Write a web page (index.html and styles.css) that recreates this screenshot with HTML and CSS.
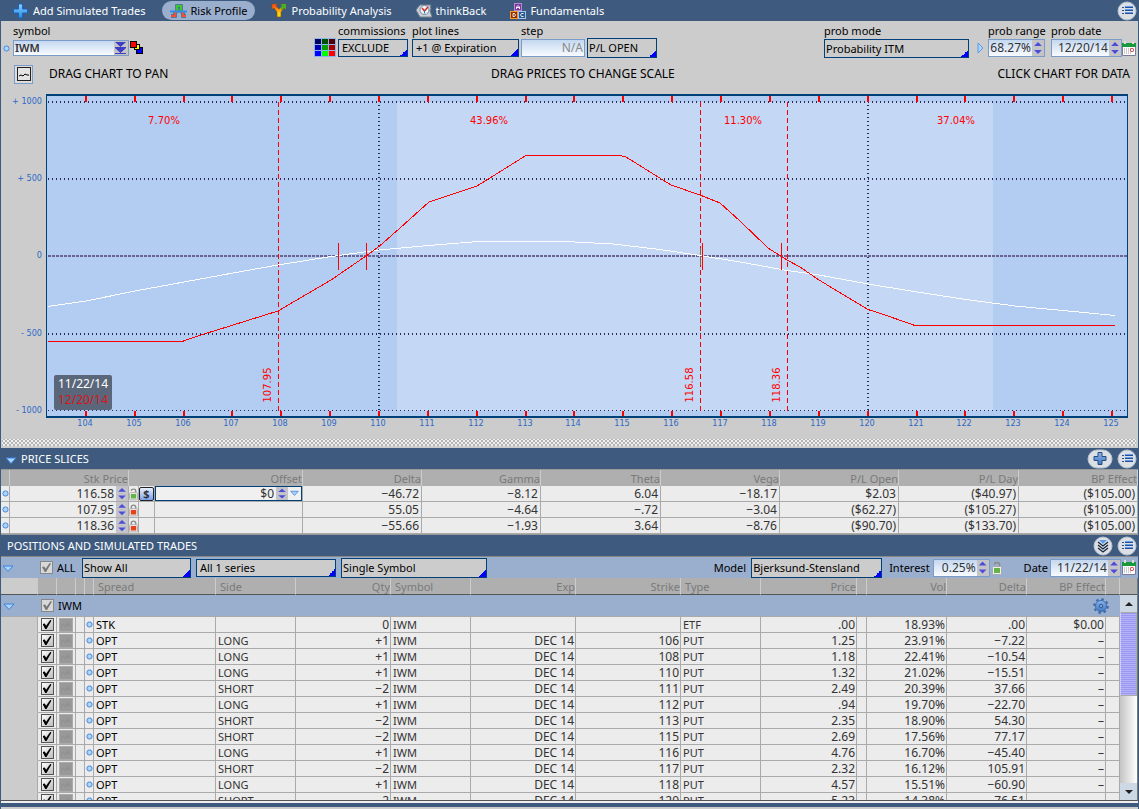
FILE: index.html
```html
<!DOCTYPE html>
<html lang="en">
<head>
<meta charset="utf-8">
<title>Risk Profile</title>
<link rel="stylesheet" href="styles.css">
</head>
<body>
<svg class="defs" width="0" height="0" aria-hidden="true">
  <defs>
    <linearGradient id="gPlus" x1="0" y1="0" x2="0" y2="1"><stop offset="0" stop-color="#8fd0ff"/><stop offset="1" stop-color="#1f8ae6"/></linearGradient>
    <linearGradient id="gY" x1="0" y1="0" x2="0" y2="1"><stop offset="0.2" stop-color="#ff5a14"/><stop offset="0.7" stop-color="#ffd800"/></linearGradient>
    <linearGradient id="gBell" x1="0" y1="0" x2="0" y2="1"><stop offset="0.4" stop-color="#38c832"/><stop offset="0.6" stop-color="#f0503c"/></linearGradient>
    <linearGradient id="gSteel" x1="0" y1="0" x2="0" y2="1"><stop offset="0" stop-color="#8db4ea"/><stop offset="1" stop-color="#4478c0"/></linearGradient>
    <symbol id="list" viewBox="0 0 20 20"><circle cx="10" cy="10" r="9" fill="#dcdfe3" stroke="#b4c2d2"/><path d="M5 6.500h2M5 9.500h2M5 12.500h2" stroke="#2b4f90"/><path d="M8 6.500h8M8 9.500h8M8 12.500h8" stroke="#2b4f90"/><path d="M8 5.500h8M8 8.500h8M8 11.500h8" stroke="#5c9cf0"/></symbol>
    <symbol id="dot" viewBox="0 0 7 7"><circle cx="3.5" cy="3.5" r="2.6" fill="#a8d4ff" stroke="#4a86d8"/></symbol>
    <symbol id="tri" viewBox="0 0 12 8"><path d="M1 1h10L6 6.500z" fill="#a8d4ff" stroke="#3c82dc"/></symbol>
    <symbol id="cal" viewBox="0 0 14 15"><path d="M.5 2.500h13v12h-13z" fill="#fff" stroke="#7a7a9a"/><path d="M0 2h14v4H0z" fill="#189a3c"/><path d="M3 0v3M11 0v3" stroke="#ddd" stroke-width="2"/><path d="M2 8h7M2 10h7M2 12h8" stroke="#999" stroke-dasharray="1 1"/><rect x="8.500" y="7.500" width="3" height="3" rx="1" fill="#fff" stroke="#e02020"/></symbol>
    <symbol id="lockR" viewBox="0 0 10 14"><path d="M2.500 6V4a2.500 2.500 0 0 1 5 0v2" fill="none" stroke="#8a8a8a" stroke-width="1.500"/><rect x=".5" y="5.500" width="9" height="8" rx="1" fill="#eee" stroke="#aaa"/><rect x="2" y="7" width="6" height="5" fill="#e8401c"/></symbol>
    <symbol id="lockG" viewBox="0 0 10 14"><path d="M2.500 3.500a2.500 2 0 0 1 5 0v2.500" fill="none" stroke="#8a8a8a" stroke-width="1.500"/><rect x=".5" y="5.500" width="9" height="8" rx="1" fill="#eee" stroke="#aaa"/><rect x="2" y="7" width="6" height="5" fill="#62b44a"/></symbol>
  </defs>
</svg>

<main class="app">
  <nav class="tabs">
    <button class="tab"><svg width="17" height="16" viewBox="0 0 17 16"><path d="M6.500 1h4v5h5v4h-5v5h-4v-5h-5V6h5z" fill="url(#gPlus)" stroke="#1d62b4"/></svg>Add Simulated Trades</button>
    <button class="tab tab-on"><svg width="17" height="14" viewBox="0 0 17 14"><path d="M1 12h4V9l2-2V2h4v5l2 2v3h3" fill="none" stroke="#3c6a80" stroke-width="3.500"/><path d="M1 12h4V9l2-2V2h4v5l2 2v3h3" fill="none" stroke="url(#gBell)" stroke-width="2.200"/><path d="M0 7.500h17" stroke="#2c90e8" stroke-width="2"/></svg>Risk Profile</button>
    <button class="tab"><svg width="16" height="15" viewBox="0 0 16 15"><path d="M1 1h5L5 3l3 3 3-3-1-2h5v5l-2-1-3 4v5H6V9L3 5 1 6z" fill="url(#gY)" stroke="#8a4a10" stroke-width=".6"/><path d="M15 1v5l-2-1-2 2-1.500-1.500L11 3l-1-2z" fill="#3fb428"/></svg>Probability Analysis</button>
    <button class="tab"><svg width="16" height="15" viewBox="0 0 16 15"><path d="M0 7l4-5h11l-1 2 1 1-1 3 2 6H4z" fill="#c9d0d8" stroke="#78828f"/><circle cx="8.500" cy="7" r="4.500" fill="#eef6fb" stroke="#70889c"/><path d="M6 5l2.500 3L12 4" fill="none" stroke="#d83020" stroke-width="1.500"/><path d="M8.500 7.500v3" stroke="#2c74b0"/></svg>thinkBack</button>
    <button class="tab"><svg width="16" height="16" viewBox="0 0 16 16"><rect x="4.500" y=".5" width="7" height="7" fill="#7a3a9a" stroke="#b888d8"/><rect x=".5" y="8.500" width="7" height="7" fill="#8a3008" stroke="#ff9a20"/><rect x="8.500" y="8.500" width="7" height="7" fill="#2a5a90" stroke="#9cc4ee"/><path d="M6.500 6V4L8 2.500 9.500 4v2M6.500 4.500h3M3 10.500v3h1.500L5.500 12l-1-1.500zM13.500 10.500h-2L10.500 12l1 1.500h2" fill="none" stroke="#fff" stroke-width=".9"/></svg>Fundamentals</button>
    <button class="icon-btn tabs-menu" aria-label="Menu"><svg width="20" height="20"><use href="#list"/></svg></button>
  </nav>

  <section class="controls">
    <div class="group group-left">
      <svg class="lead" width="7" height="7"><use href="#dot"/></svg>
      <div class="field"><label for="symbol">symbol</label>
        <div class="box symbol-box"><input id="symbol" value="IWM"><button class="drop" aria-label="Open"><svg width="13" height="12" viewBox="0 0 13 12"><path d="M1 0h11L6.500 5zM1 6h11l-5.500 5z" fill="#3c3cc8"/><path d="M1 5.500h11M1 11.500h11" stroke="#3c3cc8"/></svg></button></div>
      </div>
      <svg class="swatches" width="14" height="14" viewBox="0 0 14 14"><g stroke="#000"><rect x="6.500" y="6.500" width="6" height="6" fill="#00f"/><rect x="4.500" y="3.500" width="5" height="5" fill="#ff0"/><rect x=".5" y=".5" width="6" height="6" fill="#f00"/></g></svg>
    </div>
    <div class="group">
      <svg class="palette" width="22" height="19" viewBox="0 0 22 19"><path fill="#8cb4e8" d="M0 0h22v19H0z"/><path fill="#000060" d="M1 1h6v5H1z"/><path fill="#005000" d="M8 1h6v5H8z"/><path fill="#500000" d="M15 1h6v5h-6z"/><path fill="#0000b0" d="M1 7h6v5H1z"/><path fill="#00a000" d="M8 7h6v5H8z"/><path fill="#a80000" d="M15 7h6v5h-6z"/><path fill="#00f" d="M1 13h6v5H1z"/><path fill="#0f0" d="M8 13h6v5H8z"/><path fill="#f00" d="M15 13h6v5h-6z"/></svg>
      <div class="field"><label for="comm">commissions</label><select id="comm" class="pick w70"><option>EXCLUDE</option></select></div>
      <div class="field gap4"><label for="lines">plot lines</label><select id="lines" class="pick w107"><option>+1 @ Expiration</option></select></div>
      <div class="field gap2"><label for="step">step</label><div class="box step-box"><input id="step" value="N/A"></div></div>
      <div class="field gap2"><select aria-label="Plot value" class="pick pick-tall w70"><option>P/L OPEN</option></select></div>
    </div>
    <div class="group">
      <div class="field"><label for="mode">prob mode</label><select id="mode" class="pick pick-tall w145"><option>Probability ITM</option></select></div>
      <svg class="play" width="7" height="12" viewBox="0 0 7 12"><path d="M1 1l5 5-5 5z" fill="#a8d4ff" stroke="#5c9ae8"/></svg>
      <div class="field range"><label for="range">prob range</label><div class="box w57"><input id="range" value="68.27%"><span class="spin"><button aria-label="Up"></button><button aria-label="Down"></button></span></div></div>
      <div class="field"><label for="pdate">prob date</label><div class="box w71"><input id="pdate" value="12/20/14"><span class="spin"><button aria-label="Up"></button><button aria-label="Down"></button></span></div></div>
      <svg class="calendar" width="14" height="15"><use href="#cal"/></svg>
    </div>
  </section>

  <div class="hints">
    <button class="chart-btn" aria-label="Chart"><svg width="14" height="14" viewBox="0 0 14 14"><rect x=".5" y=".5" width="13" height="13" fill="#e4e4e4" stroke="#222"/><path d="M2 9l2-1 2 1 2-2 2 1h2" fill="none" stroke="#000"/></svg></button>
    <span class="hint-l">DRAG CHART TO PAN</span><span>DRAG PRICES TO CHANGE SCALE</span><span class="hint-r">CLICK CHART FOR DATA</span>
  </div>

  <svg class="chart" viewBox="1 90 1137 349" role="img" aria-label="Risk profile">
    <rect x="46" y="94" width="1082" height="324" fill="#004078"/>
    <rect x="47" y="96" width="1080" height="320" fill="#b2ccf2"/>
    <rect x="397" y="102" width="596" height="309" fill="#c4d7f5"/>
    <g stroke="#2c2858" stroke-width="2" stroke-dasharray="1 3">
      <path d="M48 102H1127M48 179H1127M48 334H1127"/><path d="M48 410.500H1127" stroke-width="1"/>
      <path d="M379 101V411M868 101V411"/>
    </g>
    <path d="M48 256H1127" stroke="#6a6492" stroke-width="2" stroke-dasharray="3 1"/>
    <path d="M278.500 102V411M700.500 102V411M787.500 102V411" stroke="#f00" stroke-dasharray="5 3"/>
    <path d="M700.500 248V265" stroke="#8a6a30"/>
    <g fill="none" shape-rendering="crispEdges">
      <path stroke="#fff" d="M48 306.500L86 301 135 291 184 282 233 273 278 265 331 256.500 379 250 429 245.500 478 241.500 565 241.500 613 244 660 249.500 700 255.500 740 262 787 270.500 819 275 868 284 917 292 966 299.500 1015 306 1063 310.500 1115 315.500"/>
      <path stroke="#f00" d="M48 341.500H182L204 334 230 326 278 311 295 301 331 280 366 256 379 246.500 400 228 429 202 450 195 477 186 526 155.500H620L626 157 671 185 700 195 720 203 740 221 768 248 787 260 800 267 819 280 868 309.500 885 315 915 325.500H1115"/>
      <path stroke="#f00" d="M338.500 243V270M366.500 243V270M702.500 243V270M781.500 243V270"/>
    </g>
    <g id="ticks" class="axis"></g>
    <g class="axis axis-y"><text x="42" y="104">+ 1000</text><text x="42" y="181">+ 500</text><text x="42" y="258">0</text><text x="42" y="336">- 500</text><text x="42" y="413">- 1000</text></g>
    <g class="pct"><text x="164" y="124">7.70%</text><text x="489" y="124">43.96%</text><text x="743" y="124">11.30%</text><text x="956" y="124">37.04%</text></g>
    <g class="pct"><text transform="translate(271 385) rotate(-90)">107.95</text><text transform="translate(693 385) rotate(-90)">116.58</text><text transform="translate(780 385) rotate(-90)">118.36</text></g>
    <rect x="54" y="375" width="58" height="35" rx="2" fill="#5a677a"/>
    <g class="legend"><text x="83" y="388" fill="#fff">11/22/14</text><text x="83" y="404" fill="#d8141c">12/20/14</text></g>
  </svg>
  <div class="grip"></div>

  <header class="bar"><svg class="bar-tri" width="12" height="8"><use href="#tri"/></svg><h2>PRICE SLICES</h2>
    <button class="icon-btn" aria-label="Add slice"><svg width="26" height="20" viewBox="0 0 26 20"><rect x="1" y="1" width="24" height="18" rx="9" fill="#dcdfe3" stroke="#b4c2d2"/><path d="M11 3.500h4v4h4v4h-4v4h-4v-4H7v-4h4z" fill="url(#gSteel)" stroke="#274c80"/></svg></button>
    <button class="icon-btn" aria-label="Menu"><svg width="20" height="20"><use href="#list"/></svg></button>
  </header>
  <table class="grid slices">
    <colgroup id="sliceCols"></colgroup>
    <thead><tr><th></th><th>Stk Price</th><th class="join"></th><th class="join"></th><th>Offset</th><th>Delta</th><th>Gamma</th><th>Theta</th><th>Vega</th><th>P/L Open</th><th>P/L Day</th><th>BP Effect</th></tr></thead>
    <tbody id="sliceRows"></tbody>
  </table>

  <header class="bar bar-second"><h2>POSITIONS AND SIMULATED TRADES</h2>
    <button class="icon-btn" aria-label="Expand"><svg width="20" height="20" viewBox="0 0 20 20"><circle cx="10" cy="10" r="9" fill="#dcdfe3" stroke="#b4c2d2"/><path d="M6 4h8l-4 4z" fill="#5c9cf0"/><path d="M5 6l5 4 5-4M5 9l5 4 5-4M5 12l5 4 5-4" fill="none" stroke="#152540" stroke-width="1.300"/></svg></button>
    <button class="icon-btn" aria-label="Menu"><svg width="20" height="20"><use href="#list"/></svg></button>
  </header>
  <div class="filter">
    <svg class="fold" width="12" height="8"><use href="#tri"/></svg>
    <input type="checkbox" class="tick dim" id="all" checked><label for="all" class="all">ALL</label>
    <select aria-label="Show" class="pick pick-tall w109"><option>Show All</option></select>
    <select aria-label="Series" class="pick w140"><option>All 1 series</option></select>
    <select aria-label="Grouping" class="pick pick-tall w146"><option>Single Symbol</option></select>
    <span class="push"></span>
    <label for="model">Model</label><select id="model" class="pick pick-tall w131"><option>Bjerksund-Stensland</option></select>
    <label for="interest" class="lab">Interest</label><div class="box w57"><input id="interest" value="0.25%"><span class="spin"><button aria-label="Up"></button><button aria-label="Down"></button></span></div>
    <svg class="f-lock" width="10" height="14"><use href="#lockG"/></svg>
    <label for="fdate">Date</label><div class="box w71"><input id="fdate" value="11/22/14"><span class="spin"><button aria-label="Up"></button><button aria-label="Down"></button></span></div>
    <svg width="14" height="15"><use href="#cal"/></svg>
  </div>
  <div class="positions">
    <div class="table-clip">
      <table class="grid trades">
        <colgroup id="tradeCols"></colgroup>
        <thead><tr><th class="blank"></th><th></th><th></th><th></th><th></th><th class="l">Spread</th><th class="l">Side</th><th>Qty</th><th class="l">Symbol</th><th>Exp</th><th>Strike</th><th class="l">Type</th><th>Price</th><th></th><th>Vol</th><th>Delta</th><th>BP Effect</th><th></th></tr></thead>
        <tbody id="tradeRows"><tr class="head-row"><td colspan="18"><div class="head-in"><svg class="fold" width="12" height="8"><use href="#tri"/></svg><input type="checkbox" class="tick dim" id="iwm" checked><label for="iwm">IWM</label><span class="push"></span>
          <svg width="16" height="16" viewBox="0 0 16 16"><circle cx="8" cy="8" r="6.800" fill="none" stroke="#3a6cac" stroke-width="2" stroke-dasharray="2.600 2.740"/><circle cx="8" cy="8" r="5.500" fill="url(#gSteel)" stroke="#3a6cac"/><circle cx="8" cy="8" r="1.800" fill="#7aa4dc" stroke="#2c5c98"/></svg></div></td></tr></tbody>
      </table>
    </div>
    <div class="scroll"><div class="scroll-head"></div><button class="arrow up" aria-label="Scroll up"></button><div class="track"><div class="thumb"></div></div><button class="arrow down" aria-label="Scroll down"></button></div>
  </div>
  <div class="foot"></div>
</main>
<script src="app.js"></script>
</body>
</html>
```
FILE: styles.css
```css
* { box-sizing: border-box; }
html, body { height: 100%; }
body { margin: 0; background: #ccc; color: #000; font: 11px/16px "Noto Sans", "Open Sans", sans-serif; overflow: hidden; }
button, input, select { font: inherit; color: inherit; margin: 0; padding: 0; border: 0; border-radius: 0; background: none; }
svg { display: block; flex: none; }
.defs { position: absolute; }
.app { height: 100vh; display: flex; flex-direction: column; border: solid #3e5b7f; border-width: 0 1px; background: #ccc; }
.app > * { flex: none; }

.tabs { display: flex; align-items: center; gap: 8px; height: 21px; padding-left: 3px; background: #3e5b7f; color: #fff; }
.tab { display: flex; align-items: center; gap: 4px; height: 19px; padding: 0 8px; white-space: nowrap; }
.tab-on { background: #9aaecd; color: #000; border-radius: 10px; }
.icon-btn { flex: none; height: 20px; margin-right: 1px; }
.tabs-menu { margin-left: auto; }

.controls { display: flex; justify-content: space-between; padding: 2px 2px 0; height: 37px; }
.group { display: flex; align-items: flex-end; }
.group-left { padding-right: 3px; }
.field { display: flex; flex-direction: column; align-self: stretch; }
.field label { white-space: nowrap; line-height: 16px; width: 0; }
.field label + *, .field > select:only-child { margin-top: auto; }
.field .pick, .field .box { margin-bottom: 1px; }
.field .pick-tall { margin-bottom: 0; }
.lead { margin: 0 3px 6px 0; }
.box { display: flex; height: 18px; border: 1px solid #7c9cc8; background: linear-gradient(#c4d8f0, #f8fbff); color: #333; font-size: 12px; }
.box input { flex: 1; min-width: 0; width: 0; text-align: right; padding: 0 1px; }
.symbol-box { width: 116px; height: 16px; }
.field .symbol-box { margin-bottom: 2px; }
.symbol-box input { text-align: left; font-size: 11px; font-weight: 600; }
.drop { width: 14px; background: #c4c4c4; }
.swatches { margin: 0 0 3px 1px; }
.palette { margin: 0 2px 1px 0; }
.gap4 { margin-left: 4px; }
.gap2 { margin-left: 2px; }
.step-box { width: 64px; color: #888; }
.pick { appearance: none; height: 18px; padding: 0 3px; border: 1px solid #004078; background: linear-gradient(135deg, transparent 50%, #00f 50%) right bottom / 7px 7px no-repeat #ccc; line-height: 16px; }
.pick-tall { height: 20px; padding-left: 1px; }
.w70 { width: 70px; }
.w107 { width: 107px; }
.w145 { width: 145px; }
.w57 { width: 57px; }
.w71 { width: 71px; }
.w109 { width: 109px; }
.w140 { width: 140px; }
.w146 { width: 146px; }
.w131 { width: 131px; }
.play { margin: 0 4px 4px 8px; }
.range { margin-right: 6px; }
.calendar { margin-bottom: 2px; }
.spin { display: flex; flex-direction: column; width: 12px; flex: none; background: #c4c4c8; }
.spin button { flex: 1; background: #4b4bdc; clip-path: polygon(50% 25%, 82% 75%, 18% 75%); }
.spin button:last-child { clip-path: polygon(18% 25%, 82% 25%, 50% 75%); }

.hints { display: flex; align-items: center; justify-content: space-between; height: 32px; padding: 0 8px 0 13px; font-size: 12px; }
.chart-btn { width: 19px; height: 19px; display: grid; place-items: center; border: 1px solid #7c9cc8; background: #ddd; }
.hint-l { margin-left: 16px; margin-right: auto; }
.hint-r { margin-left: auto; }

.chart { width: 100%; height: auto; }
.axis text { font: 9px "DejaVu Sans Condensed", "DejaVu Sans", sans-serif; fill: #2c68c8; text-anchor: middle; }
.axis-y text { text-anchor: end; }
.pct text { font: 10px "DejaVu Sans", sans-serif; fill: #f00; text-anchor: middle; }
.legend text { font: 12px "Noto Sans", sans-serif; text-anchor: middle; }
.grip { height: 9px; margin: 0 2px 0 1px; background: radial-gradient(circle, rgba(255, 255, 255, .8) 1px, transparent 1px) 0 0 / 4px 4px, radial-gradient(circle, rgba(255, 255, 255, .8) 1px, transparent 1px) 2px 2px / 4px 4px, #b4b4b4; border-bottom: 2px solid #ccc; }

.bar { display: flex; align-items: center; height: 21px; background: #3e5b7f; color: #fff; padding-left: 4px; }
.bar h2 { margin: 0 auto 0 0; font: inherit; }
.bar-tri { margin: 5px 4px 0 0; }
.bar .icon-btn { margin-left: 3px; }
.bar-second { padding-left: 6px; }

.grid { width: 100%; table-layout: fixed; border-collapse: separate; border-spacing: 0; background: #ececec; }
.grid th, .grid td { padding: 0 1px; height: 16px; line-height: 15px; text-align: right; white-space: nowrap; overflow: hidden; border: solid #aaa; border-width: 0 1px 1px 0; font-weight: 400; color: #333; }
.grid td { font-size: 12px; }
.grid th { background: #afafaf; color: #7a7a7a; border-color: #ccc; border-bottom: 0; padding: 0; }
.grid td.l { text-align: left; padding-left: 2px; font-size: 11px; }
.grid td > svg { margin: 0 auto; }
.slices { border-bottom: 1px solid #999; border-top: 1px solid #999; }
.slices .join { border-right: 0; }
.slices td { padding-right: 2px; }
.slices td.ic { padding: 0; }
.cell { display: flex; justify-content: flex-end; align-items: center; height: 15px; gap: 2px; }
.cell .spin { height: 15px; width: 12px; }
.slices td.price { padding-right: 0; }
.dollar { width: 15px; height: 14px; display: block; line-height: 12px; border: 1px solid #222; border-radius: 2px; background: linear-gradient(#e8f0ff, #7ca0ec); text-align: center; font-size: 11px; font-weight: 700; }
.slices td.edit { padding: 0; }
.edit .cell { border: 1px solid #004078; background: #f0f0f0; }
.edit .spin { height: 13px; }
.edit input { flex: 1; width: 0; text-align: right; }
.edit .cell svg { margin: 0 2px 0 0; }

.filter { display: flex; align-items: center; height: 22px; padding: 0 2px 0 1px; background: #9aaecd; border-top: 1px solid #888; }
.fold { margin: 3px 26px 0 0; }
.tick { appearance: none; flex: none; width: 13px; height: 13px; border: 1px solid #555; background: linear-gradient(135deg, #fff, #bbb); display: grid; place-items: center; }
.tick:checked::before { content: ""; width: 9px; height: 9px; background: #000; clip-path: polygon(0 45%, 25% 40%, 40% 65%, 85% 0, 100% 5%, 45% 100%, 30% 100%); }
.dim { border-color: #888; background: #d8d8d8; }
.dim:checked::before { background: #777; }
.all { margin: 0 4px; width: 21px; }
.filter .w140 { margin: 0 5px; }
.push { flex: 1; }
.filter #model { margin: 0 7px 0 5px; }
.lab { margin-right: 3px; }
.f-lock { margin: 0 22px 0 2px; }
.filter label { white-space: nowrap; }
.filter .w71 { margin-left: 2px; margin-right: 1px; }

.app > .positions { flex: 1 1 0; min-height: 0; display: flex; border-bottom: 1px solid #555; border-right: 1px solid #777; }
.table-clip { flex: 1; min-width: 0; overflow: hidden; background: #ccc; }
.trades th { height: 17px; border-bottom: 1px solid #555; }
.trades th.blank, .trades td.blank { background: #ccc; }
.trades th.l { padding-left: 4px; text-align: left; }
.trades td.blank { border-bottom-color: #ccc; }
.trades td.name { color: #000; }
.trades .head-row td { height: 22px; background: #9aaecd; padding: 0; border-right-color: #9aaecd; }
.head-in { display: flex; align-items: center; height: 21px; padding: 0 10px 0 2px; color: #000; font-size: 11px; }
.head-in label { margin-left: 4px; }
.trades td > .tick { margin: 0 auto; }
.spark { display: block; width: 14px; height: 14px; background: #999; border: 1px solid #aaa; }

.scroll { width: 17px; flex: none; display: flex; flex-direction: column; }
.scroll-head { height: 17px; background: #afafaf; border-bottom: 1px solid #555; }
.arrow { height: 17px; background: #ccd8e4; display: grid; place-items: center; }
.arrow::before { content: ""; border: 4px solid transparent; border-top-width: 0; border-bottom-color: #222; }
.down::before { border-top: 4px solid #222; border-bottom: 0; }
.track { flex: 1; background: linear-gradient(90deg, #c4c4c4, #fff); }
.thumb { height: 49%; border: 1px solid #aaa; border-left-color: #ccccff; background: repeating-linear-gradient(#9a98ee 0 1px, #b4b2f8 1px 2px); }
.foot { height: 8px; border-top: 2px solid #eee; border-bottom: 2px solid #ccc; background: #3e5b7f; }
```
FILE: app.js
```js
const spin = '<span class="spin"><button aria-label="Up"></button><button aria-label="Down"></button></span>';
const icon = (id, w, h) => `<svg width="${w}" height="${h}"><use href="#${id}"/></svg>`;

function columns(id, widths) {
  document.getElementById(id).innerHTML = widths.map(w => `<col style="width:${w}px">`).join("");
}
columns("sliceCols", [9, 119, 10, 16, 148, 119, 119, 120, 119, 119, 120, 119]);
columns("tradeCols", [37, 19, 19, 9, 9, 122, 80, 95, 80, 105, 105, 80, 96, 10, 80, 80, 79, 14]);

let ticks = "";
for (let p = 104; p <= 125; p++) {
  const x = Math.round(379 + (p - 110) * 48.87);
  ticks += `<path d="M${x} 96v6M${x} 411v5" stroke="#f00" stroke-width="2"/><text x="${x - 1}" y="426">${p}</text>`;
}
document.getElementById("ticks").innerHTML = ticks;

const slices = [
  ["116.58", "−46.72", "−8.12", "6.04", "−18.17", "$2.03", "($40.97)", "($105.00)"],
  ["107.95", "55.05", "−4.64", "−.72", "−3.04", "($62.27)", "($105.27)", "($105.00)"],
  ["118.36", "−55.66", "−1.93", "3.64", "−8.76", "($90.70)", "($133.70)", "($105.00)"]
];
document.getElementById("sliceRows").innerHTML = slices.map((r, i) => `<tr>
  <td class="ic">${icon("dot", 7, 7)}</td>
  <td class="price"><div class="cell">${r[0]}${spin}</div></td>
  <td class="ic">${icon(i ? "lockR" : "lockG", 9, 14)}</td>
  <td class="ic">${i ? "" : '<button class="dollar">$</button>'}</td>
  <td class="${i ? "" : "edit"}">${i ? "" : `<div class="cell"><input aria-label="Offset" value="$0">${spin}${icon("tri", 9, 7)}</div>`}</td>
  ${r.slice(1).map(v => `<td>${v}</td>`).join("")}</tr>`).join("");

const trades = [
  ["STK", "", "0", "", "", "ETF", ".00", "18.93%", ".00", "$0.00"],
  ["OPT", "LONG", "+1", "DEC 14", "106", "PUT", "1.25", "23.91%", "−7.22", "–"],
  ["OPT", "LONG", "+1", "DEC 14", "108", "PUT", "1.18", "22.41%", "−10.54", "–"],
  ["OPT", "LONG", "+1", "DEC 14", "110", "PUT", "1.32", "21.02%", "−15.51", "–"],
  ["OPT", "SHORT", "−2", "DEC 14", "111", "PUT", "2.49", "20.39%", "37.66", "–"],
  ["OPT", "LONG", "+1", "DEC 14", "112", "PUT", ".94", "19.70%", "−22.70", "–"],
  ["OPT", "SHORT", "−2", "DEC 14", "113", "PUT", "2.35", "18.90%", "54.30", "–"],
  ["OPT", "SHORT", "−2", "DEC 14", "115", "PUT", "2.69", "17.56%", "77.17", "–"],
  ["OPT", "LONG", "+1", "DEC 14", "116", "PUT", "4.76", "16.70%", "−45.40", "–"],
  ["OPT", "SHORT", "−2", "DEC 14", "117", "PUT", "2.32", "16.12%", "105.91", "–"],
  ["OPT", "LONG", "+1", "DEC 14", "118", "PUT", "4.57", "15.51%", "−60.90", "–"],
  ["OPT", "SHORT", "−2", "DEC 14", "120", "PUT", "5.23", "14.38%", "76.51", "–"]
];
document.getElementById("tradeRows").insertAdjacentHTML("beforeend", trades.map(t => `<tr>
  <td class="blank"></td>
  <td><input type="checkbox" class="tick" aria-label="Include" checked></td>
  <td><svg class="spark" width="14" height="14" viewBox="0 0 14 14"><path d="M1 9l3-3 3 3 2-4 3 4" fill="none" stroke="#888"/></svg></td>
  <td></td><td>${icon("dot", 7, 7)}</td>
  <td class="l name">${t[0]}</td><td class="l">${t[1]}</td><td>${t[2]}</td><td class="l">IWM</td>
  <td>${t[3]}</td><td>${t[4]}</td><td class="l">${t[5]}</td><td>${t[6]}</td><td></td>
  <td>${t[7]}</td><td>${t[8]}</td><td>${t[9]}</td><td></td></tr>`).join(""));
```
